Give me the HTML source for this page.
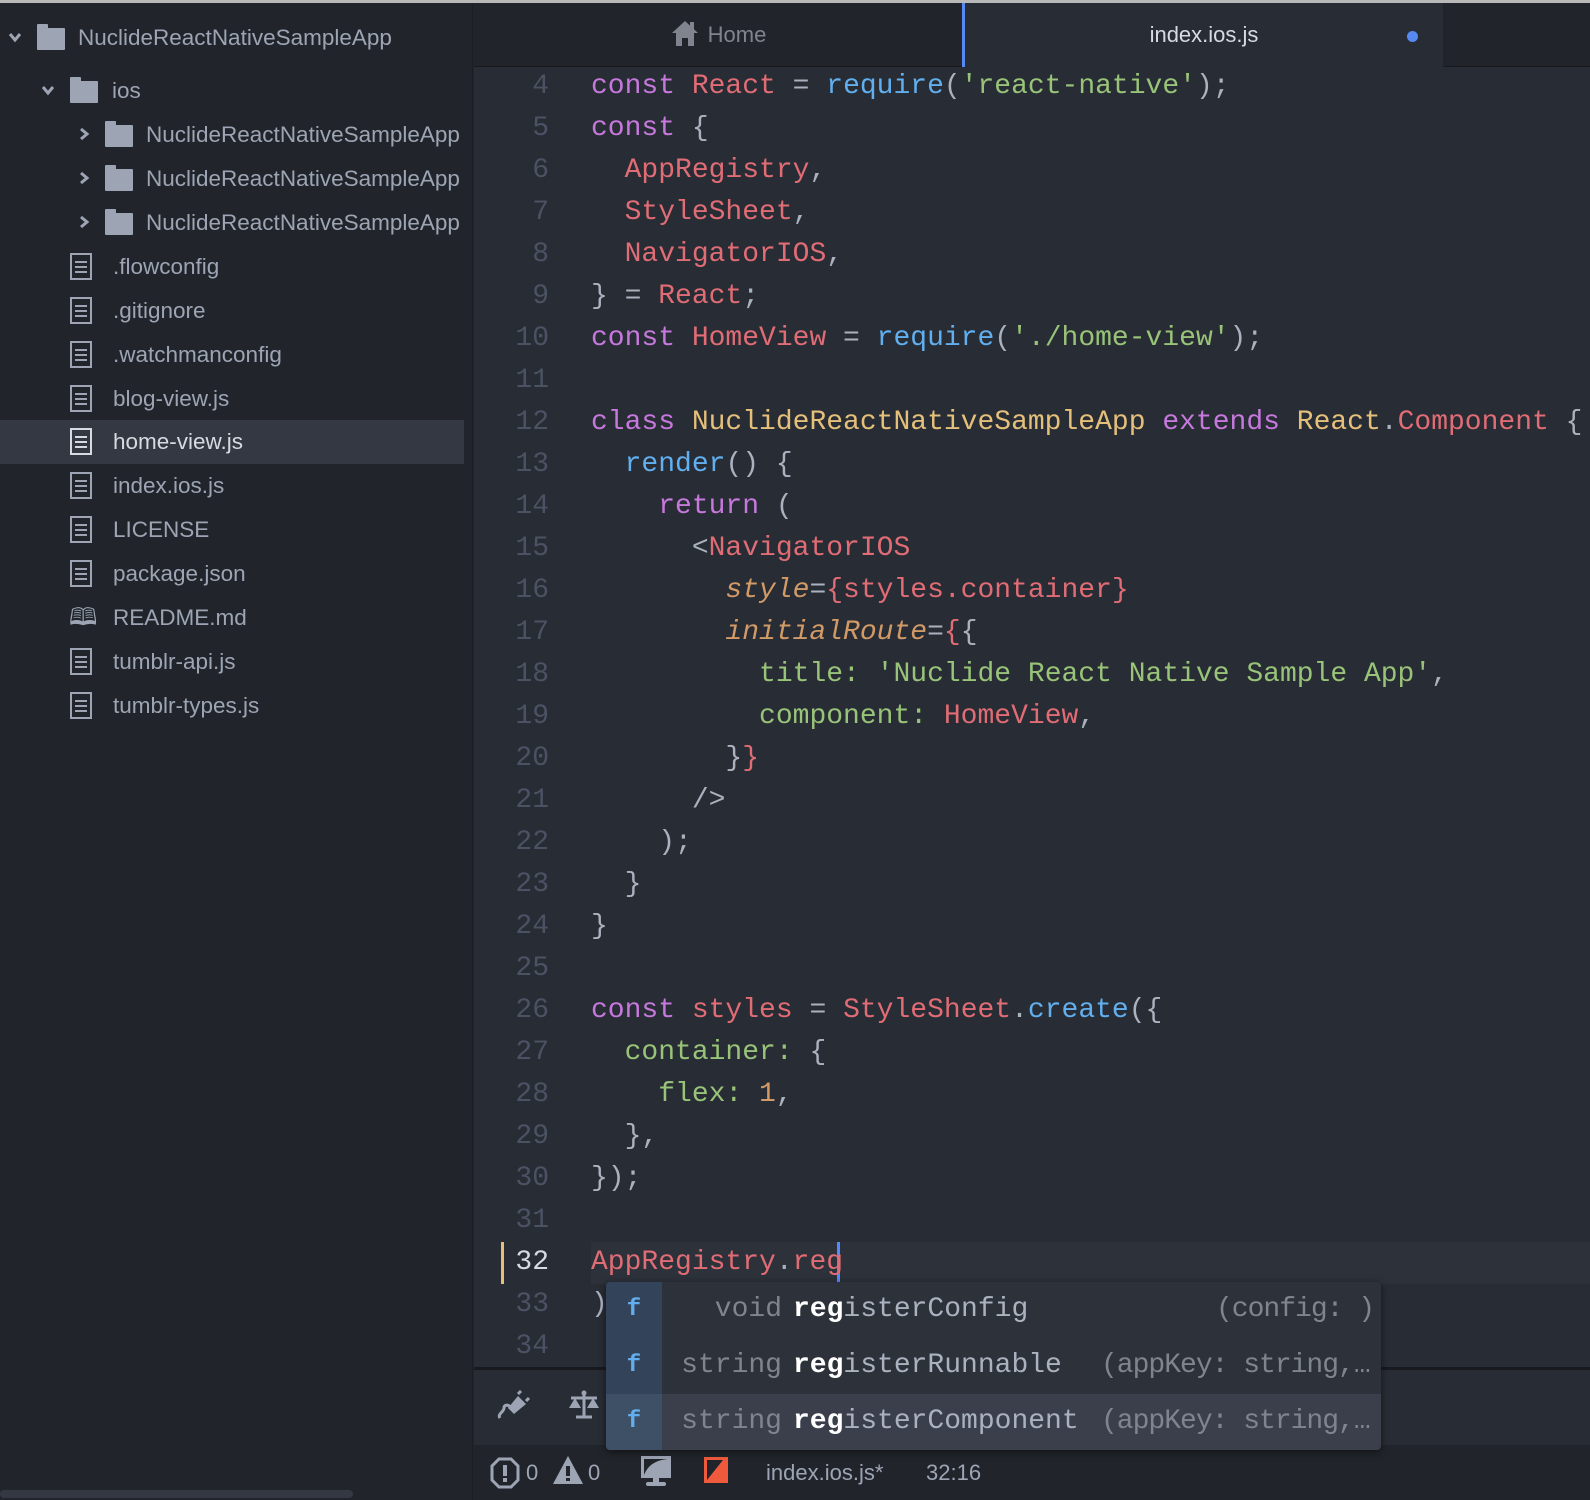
<!DOCTYPE html>
<html><head><meta charset="utf-8"><style>
*{margin:0;padding:0;box-sizing:border-box}
body{width:1590px;height:1500px;background:#21252b;position:relative;overflow:hidden;font-family:"Liberation Sans",sans-serif}
.topline{position:absolute;left:0;top:0;width:1590px;height:3px;background:#b9b9b9}
.side{position:absolute;left:0;top:3px;width:473px;height:1497px;background:#21252b;border-right:1px solid #1b1e23}
.row{position:absolute;left:0;height:44px;line-height:44px;font-size:22.5px;color:#9da5b4;white-space:nowrap;width:464px;overflow:hidden}
.row.sel{background:#333842;color:#d7dae0}
.row span{position:absolute}
.fold{position:absolute;width:28px;height:22px;background:#9da5b4;border-radius:1px}
.fold:before{content:"";position:absolute;left:0;top:-4px;width:11px;height:5px;background:#9da5b4;border-radius:1px 1px 0 0}
.chev{position:absolute;top:14px}
.file{position:absolute;width:22px;height:27px;border:2px solid #9da5b4;top:8px}
.file i{position:absolute;left:3px;height:2px;width:12px;background:#9da5b4}
.tabs{position:absolute;left:474px;top:3px;width:1116px;height:64px;background:#21252b;border-bottom:1px solid #181a1f}
.tab{position:absolute;top:0;height:64px;line-height:64px;font-size:22px;text-align:center}
.ed{position:absolute;left:474px;top:67px;width:1116px;height:1300px;background:#282c34}
.code{position:absolute;font-family:"Liberation Mono",monospace;font-size:28px;white-space:pre;line-height:42px;color:#abb2bf}
.ln{position:absolute;width:75px;text-align:right;font-family:"Liberation Mono",monospace;font-size:28px;line-height:42px;color:#4b5263}
.k{color:#c678dd}.r{color:#e06c75}.b{color:#61afef}.g{color:#98c379}.o{color:#d19a66}.y{color:#e5c07b}.it{font-style:italic;color:#d19a66}
.panel{position:absolute;left:474px;top:1367px;width:1116px;height:78px;background:#282c34;border-top:3px solid #181a1f}
.status{position:absolute;left:474px;top:1445px;width:1116px;height:55px;background:#21252b;color:#9da5b4;font-size:22px}
.ac{position:absolute;left:606px;top:1282px;width:775px;height:168px;background:#2c313a;border-radius:4px;overflow:hidden;box-shadow:0 2px 8px rgba(0,0,0,.5);font-family:"Liberation Mono",monospace;font-size:28px}
.acrow{position:absolute;left:0;width:775px;height:56px;line-height:56px;white-space:pre}
.acrow .f{position:absolute;left:0;width:56px;height:56px;background:#33435a;color:#61afef;text-align:center;font-weight:bold;font-size:24px}
.t{color:#7f848e;position:absolute;text-align:right;width:120px;left:56px}
.nm{position:absolute;left:187px;color:#abb2bf}
.nm b{color:#fff}
.sig{position:absolute;left:495px;color:#7f848e;letter-spacing:-1px}
</style></head><body>
<div class="topline"></div>
<div class="side">
 <div class="row" style="top:13px"><svg class="chev" style="left:8px" width="14" height="14" viewBox="0 0 14 14"><path d="M2 4L7 10L12 4" fill="none" stroke="#9da5b4" stroke-width="3"/></svg><div class="fold" style="left:37px;top:12px"></div><span style="left:78px">NuclideReactNativeSampleApp</span></div>
 <div class="row" style="top:66px"><svg class="chev" style="left:41px" width="14" height="14" viewBox="0 0 14 14"><path d="M2 4L7 10L12 4" fill="none" stroke="#9da5b4" stroke-width="3"/></svg><div class="fold" style="left:70px;top:12px"></div><span style="left:112px">ios</span></div>
 <div class="row" style="top:110px"><svg class="chev" style="left:77px" width="14" height="14" viewBox="0 0 14 14"><path d="M4 2L10 7L4 12" fill="none" stroke="#9da5b4" stroke-width="3"/></svg><div class="fold" style="left:105px;top:12px"></div><span style="left:146px">NuclideReactNativeSampleApp</span></div>
 <div class="row" style="top:154px"><svg class="chev" style="left:77px" width="14" height="14" viewBox="0 0 14 14"><path d="M4 2L10 7L4 12" fill="none" stroke="#9da5b4" stroke-width="3"/></svg><div class="fold" style="left:105px;top:12px"></div><span style="left:146px">NuclideReactNativeSampleApp</span></div>
 <div class="row" style="top:198px"><svg class="chev" style="left:77px" width="14" height="14" viewBox="0 0 14 14"><path d="M4 2L10 7L4 12" fill="none" stroke="#9da5b4" stroke-width="3"/></svg><div class="fold" style="left:105px;top:12px"></div><span style="left:146px">NuclideReactNativeSampleApp</span></div>
 <div class="row" style="top:242px"><div class="file" style="left:70px"><i style="top:6px"></i><i style="top:11px"></i><i style="top:16px"></i></div><span style="left:113px">.flowconfig</span></div>
 <div class="row" style="top:286px"><div class="file" style="left:70px"><i style="top:6px"></i><i style="top:11px"></i><i style="top:16px"></i></div><span style="left:113px">.gitignore</span></div>
 <div class="row" style="top:330px"><div class="file" style="left:70px"><i style="top:6px"></i><i style="top:11px"></i><i style="top:16px"></i></div><span style="left:113px">.watchmanconfig</span></div>
 <div class="row" style="top:374px"><div class="file" style="left:70px"><i style="top:6px"></i><i style="top:11px"></i><i style="top:16px"></i></div><span style="left:113px">blog-view.js</span></div>
 <div class="row sel" style="top:417px"><div class="file" style="left:70px;border-color:#d7dae0"><i style="top:6px;background:#d7dae0"></i><i style="top:11px;background:#d7dae0"></i><i style="top:16px;background:#d7dae0"></i></div><span style="left:113px">home-view.js</span></div>
 <div class="row" style="top:461px"><div class="file" style="left:70px"><i style="top:6px"></i><i style="top:11px"></i><i style="top:16px"></i></div><span style="left:113px">index.ios.js</span></div>
 <div class="row" style="top:505px"><div class="file" style="left:70px"><i style="top:6px"></i><i style="top:11px"></i><i style="top:16px"></i></div><span style="left:113px">LICENSE</span></div>
 <div class="row" style="top:549px"><div class="file" style="left:70px"><i style="top:6px"></i><i style="top:11px"></i><i style="top:16px"></i></div><span style="left:113px">package.json</span></div>
 <div class="row" style="top:593px"><span style="left:69px;font-size:24px">&#128366;</span><span style="left:113px">README.md</span></div>
 <div class="row" style="top:637px"><div class="file" style="left:70px"><i style="top:6px"></i><i style="top:11px"></i><i style="top:16px"></i></div><span style="left:113px">tumblr-api.js</span></div>
 <div class="row" style="top:681px"><div class="file" style="left:70px"><i style="top:6px"></i><i style="top:11px"></i><i style="top:16px"></i></div><span style="left:113px">tumblr-types.js</span></div>
 <div style="position:absolute;left:0;top:1487px;width:353px;height:8px;background:#333842;border-radius:4px"></div>
</div>
<div class="tabs">
 <div class="tab" style="left:0;width:488px;color:#7f848e"><svg width="30" height="28" viewBox="0 0 30 28" style="vertical-align:-5px;margin-right:8px"><path d="M15 2 L2 14 H6 V27 H12 V19 H18 V27 H24 V14 H28 Z" fill="#7f848e"/><rect x="20" y="3" width="4" height="8" fill="#7f848e"/></svg>Home</div>
 <div class="tab" style="left:488px;width:481px;background:#282c34;color:#d7dae0;border-left:3px solid #568af2">index.ios.js<span style="position:absolute;left:442px;top:28px;width:11px;height:11px;border-radius:50%;background:#568af2"></span></div>
</div>
<div class="ed">
 <div style="position:absolute;left:117px;top:1175px;width:999px;height:42px;background:#2c313a"></div>
 <div style="position:absolute;left:27px;top:1175px;width:3px;height:42px;background:#e5c07b"></div>
 <div style="position:absolute;left:363px;top:1175px;width:3px;height:42px;background:#528bff"></div>
</div>
<div class="ln" style="left:474px;top:66px">4</div>
<div class="ln" style="left:474px;top:108px">5</div>
<div class="ln" style="left:474px;top:150px">6</div>
<div class="ln" style="left:474px;top:192px">7</div>
<div class="ln" style="left:474px;top:234px">8</div>
<div class="ln" style="left:474px;top:276px">9</div>
<div class="ln" style="left:474px;top:318px">10</div>
<div class="ln" style="left:474px;top:360px">11</div>
<div class="ln" style="left:474px;top:402px">12</div>
<div class="ln" style="left:474px;top:444px">13</div>
<div class="ln" style="left:474px;top:486px">14</div>
<div class="ln" style="left:474px;top:528px">15</div>
<div class="ln" style="left:474px;top:570px">16</div>
<div class="ln" style="left:474px;top:612px">17</div>
<div class="ln" style="left:474px;top:654px">18</div>
<div class="ln" style="left:474px;top:696px">19</div>
<div class="ln" style="left:474px;top:738px">20</div>
<div class="ln" style="left:474px;top:780px">21</div>
<div class="ln" style="left:474px;top:822px">22</div>
<div class="ln" style="left:474px;top:864px">23</div>
<div class="ln" style="left:474px;top:906px">24</div>
<div class="ln" style="left:474px;top:948px">25</div>
<div class="ln" style="left:474px;top:990px">26</div>
<div class="ln" style="left:474px;top:1032px">27</div>
<div class="ln" style="left:474px;top:1074px">28</div>
<div class="ln" style="left:474px;top:1116px">29</div>
<div class="ln" style="left:474px;top:1158px">30</div>
<div class="ln" style="left:474px;top:1200px">31</div>
<div class="ln" style="left:474px;top:1242px;color:#d7dae0">32</div>
<div class="ln" style="left:474px;top:1284px">33</div>
<div class="ln" style="left:474px;top:1326px">34</div>
<div class="code" style="left:591px;top:66px"><span class="k">const</span> <span class="r">React</span> = <span class="b">require</span>(<span class="g">'react-native'</span>);
<span class="k">const</span> {
  <span class="r">AppRegistry</span>,
  <span class="r">StyleSheet</span>,
  <span class="r">NavigatorIOS</span>,
} = <span class="r">React</span>;
<span class="k">const</span> <span class="r">HomeView</span> = <span class="b">require</span>(<span class="g">'./home-view'</span>);

<span class="k">class</span> <span class="y">NuclideReactNativeSampleApp</span> <span class="k">extends</span> <span class="y">React</span>.<span class="r">Component</span> {
  <span class="b">render</span>() {
    <span class="k">return</span> (
      &lt;<span class="r">NavigatorIOS</span>
        <span class="it">style</span>=<span class="r">{styles.container}</span>
        <span class="it">initialRoute</span>=<span class="r">{</span>{
          <span class="g">title:</span> <span class="g">'Nuclide React Native Sample App'</span>,
          <span class="g">component:</span> <span class="r">HomeView</span>,
        }<span class="r">}</span>
      /&gt;
    );
  }
}

<span class="k">const</span> <span class="r">styles</span> = <span class="r">StyleSheet</span>.<span class="b">create</span>({
  <span class="g">container:</span> {
    <span class="g">flex:</span> <span class="o">1</span>,
  },
});

<span class="r">AppRegistry</span>.<span class="r">reg</span>
)</div>
<div class="panel">
 <svg style="position:absolute;left:22px;top:20px" width="34" height="32" viewBox="0 0 34 32"><path d="M4 28 C1 24 8 22 8 18 C8 15 12 14 14 17" fill="none" stroke="#9da5b4" stroke-width="3"/><path d="M12 18 L22 6 L30 14 L18 24 Z" fill="#9da5b4"/><path d="M22 4 L25 1 M30 11 L33 8" stroke="#9da5b4" stroke-width="3"/></svg>
 <svg style="position:absolute;left:94px;top:20px" width="32" height="30" viewBox="0 0 32 30"><path d="M16 2V26M8 27H24M3 8H29" stroke="#9da5b4" stroke-width="3"/><path d="M1 18 L7 8 L13 18Z M19 18 L25 8 L31 18Z" fill="#9da5b4"/><circle cx="16" cy="3" r="2.5" fill="#9da5b4"/></svg>
</div>
<div class="status">
 <svg style="position:absolute;left:16px;top:12px" width="30" height="32" viewBox="0 0 30 32"><path d="M9 2H21L28 9V23L21 30H9L2 23V9Z" fill="none" stroke="#9da5b4" stroke-width="3"/><rect x="13" y="8" width="4" height="11" fill="#9da5b4"/><rect x="13" y="21" width="4" height="4" fill="#9da5b4"/></svg>
 <span style="position:absolute;left:52px;top:15px">0</span>
 <svg style="position:absolute;left:78px;top:10px" width="32" height="30" viewBox="0 0 32 30"><path d="M16 1L31 29H1Z" fill="#9da5b4"/><rect x="14" y="11" width="4" height="10" fill="#21252b"/><rect x="14" y="23" width="4" height="3" fill="#21252b"/></svg>
 <span style="position:absolute;left:114px;top:15px">0</span>
 <svg style="position:absolute;left:166px;top:10px" width="32" height="32" viewBox="0 0 32 32"><rect x="1" y="1" width="30" height="22" fill="#9da5b4"/><rect x="4" y="4" width="24" height="16" fill="#21252b"/><path d="M4 20 C8 10 16 5 28 4 V20Z" fill="#9da5b4"/><rect x="13" y="23" width="6" height="4" fill="#9da5b4"/><rect x="6" y="27" width="20" height="4" rx="2" fill="#9da5b4"/></svg>
 <svg style="position:absolute;left:230px;top:12px" width="24" height="26" viewBox="0 0 24 26"><rect width="24" height="26" fill="#f05a3c"/><path d="M3 3 H19 L3 23Z" fill="#21252b"/></svg>
 <span style="position:absolute;left:292px;top:15px">index.ios.js*</span>
 <span style="position:absolute;left:452px;top:15px">32:16</span>
</div>
<div class="ac">
 <div class="acrow" style="top:0"><span class="f">f</span><span class="t">void</span><span class="nm"><b>reg</b>isterConfig</span><span class="sig" style="left:610px">(config: )</span></div>
 <div class="acrow" style="top:56px"><span class="f">f</span><span class="t">string</span><span class="nm"><b>reg</b>isterRunnable</span><span class="sig">(appKey: string,…</span></div>
 <div class="acrow" style="top:112px;background:#3a3f4b"><span class="f" style="background:#3d5066">f</span><span class="t">string</span><span class="nm"><b>reg</b>isterComponent</span><span class="sig">(appKey: string,…</span></div>
</div>
</body></html>
